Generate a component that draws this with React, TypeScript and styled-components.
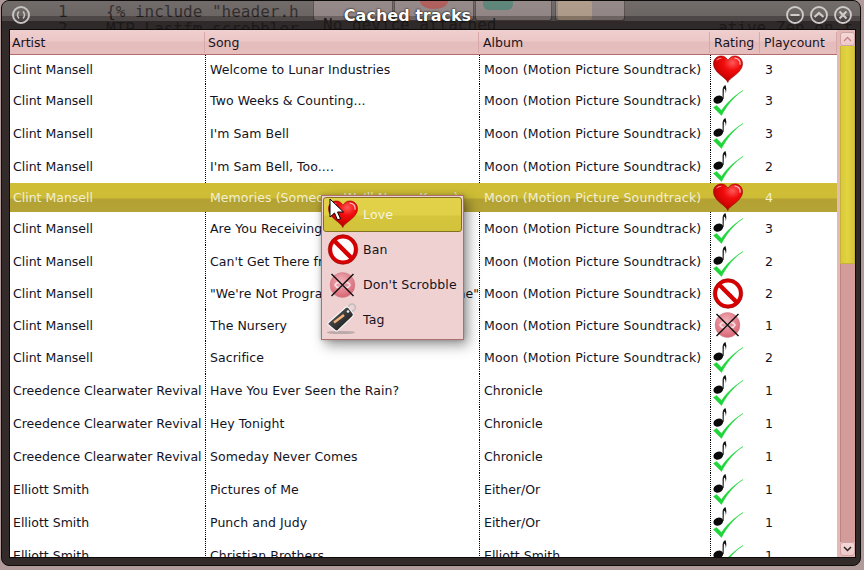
import React from "react";
import styled, { createGlobalStyle } from "styled-components";

const Global = createGlobalStyle`
  html, body { margin: 0; padding: 0; background: #b49c9c; }
  body { font-family: "DejaVu Sans", sans-serif; font-size: 12px; }
`;

const GRID = "195px 274px 231px 50px 77px";

const Page = styled.div`
  width: 864px; height: 570px; padding-left: 1px; box-sizing: border-box;
  overflow: hidden; background: #b09a9a;
`;
const Win = styled.div`
  width: 860px; height: 566px; box-sizing: border-box;
  display: flex; flex-direction: column;
  background: #332b2a; border: 1px solid #0e0b0b; border-radius: 8px;
  overflow: hidden; padding: 0 4px 7px 7px;
`;
const TitleBar = styled.div`
  position: relative; flex: 0 0 28px; margin: 0 -4px 0 -7px;
  display: flex; align-items: center; padding: 0 7px 0 9px;
  background: linear-gradient(#625b5a 0, #625b5a 20px, #3b3534 20px, #3b3534 100%);
  overflow: hidden;
`;
const BackBlock = styled.div<{ $x: number; $w: number; $h: number; $c: string }>`
  position: absolute; top: 0; left: ${p => p.$x}px; width: ${p => p.$w}px; height: ${p => p.$h}px;
  background: ${p => p.$c}; box-sizing: border-box; border: 1px solid #4d4342; border-top: 0; border-radius: 0 0 3px 3px;
`;
const BackShape = styled.div<{ $x: number; $y: number; $w: number; $h: number; $c: string; $r: string }>`
  position: absolute; left: ${p => p.$x}px; top: ${p => p.$y}px; width: ${p => p.$w}px; height: ${p => p.$h}px;
  background: ${p => p.$c}; border-radius: ${p => p.$r};
`;
const BackCode = styled.span<{ $x: number; $y: number }>`
  position: absolute; left: ${p => p.$x}px; top: ${p => p.$y}px;
  font: 16px/18px "DejaVu Sans Mono", monospace; color: #242020; white-space: pre;
`;
const Gloss = styled.div`
  position: absolute; inset: 0;
  background: linear-gradient(rgba(255,255,255,.1) 0, rgba(255,255,255,.06) 15px, rgba(0,0,0,.22) 15px, rgba(0,0,0,.2) 100%);
`;
const TitleText = styled.div`
  position: relative; flex: 1; text-align: center; color: #fff; font-weight: 700;
  font-size: 16px; padding-right: 1px; margin-top: 1px;
  text-shadow: 0 0 2px #000, 0 0 1px #000;
`;
const TitleBtn = styled.svg`
  position: relative; width: 20px; height: 20px; display: block; flex: none;
  & + & { margin-left: 4px; }
`;
const Frame = styled.div`
  position: relative; flex: 1; min-height: 0; display: flex;
  border: 1px solid #0b0909; background: #fff; overflow: hidden;
  width: 847px; box-sizing: border-box;
`;
const Main = styled.div`
  width: 827px; flex: none; display: flex; flex-direction: column; overflow: hidden;
`;
const Header = styled.div`
  display: grid; grid-template-columns: ${GRID}; height: 25px; box-sizing: border-box; flex: none;
  border-bottom: 1px solid #b56b6b;
  background: linear-gradient(#f0cfcf 0, #ecc7c7 11px, #e5bcbc 12px, #e6bebe 100%);
`;
const HeadCell = styled.div`
  display: flex; align-items: center; padding: 0 0 1px 2px; color: #17131c;
  border-right: 1px solid #d8a8a8; box-sizing: border-box; margin: 2px 0 1px; font-size: 12.5px;
  &:nth-child(2) { padding-left: 3px; }
  &:nth-child(3), &:nth-child(4) { padding-left: 4px; }
  &:nth-child(5) { padding-left: 4px; font-size: 12.4px; }
`;
const Row = styled.div<{ $h: number; $sel?: boolean }>`
  display: grid; grid-template-columns: ${GRID}; flex: none; height: ${p => p.$h}px;
  color: ${p => (p.$sel ? "#f2eed2" : "#13131f")};
  background: ${p => (p.$sel ? "linear-gradient(#d0bf35 0, #cdbc35 15px, #b3a233 16px, #b4a335 100%)" : "#fff")};
`;
const Cell = styled.div<{ $dot?: boolean; $sel?: boolean; $track?: number }>`
  display: flex; align-items: center; box-sizing: border-box; white-space: nowrap; overflow: hidden;
  font-size: 12.5px; letter-spacing: ${p => p.$track ?? 0}px;
  padding-left: ${p => (p.$dot ? 4 : 3)}px;
  border-left: ${p => (p.$dot ? `1px dotted ${p.$sel ? "transparent" : "#000"}` : "0")};
`;
const RatingCell = styled(Cell)`
  padding-left: 1px;
`;
const CountCell = styled(Cell)`
  padding-left: 5px;
`;
const Scroll = styled.div`
  width: 18px; flex: none; box-sizing: border-box; display: flex; flex-direction: column;
  padding: 2px 0 1px 3px; background: #e6b9b9;
`;
const ScrollBtn = styled.div`
  flex: 0 0 14px; width: 15px; box-sizing: border-box; display: flex; align-items: center; justify-content: center;
  background: linear-gradient(#f4d8d8, #ecc9c9); border: 1px solid #cfa3a3; border-radius: 3px;
`;
const Thumb = styled.div`
  flex: 0 0 218px; width: 15px; box-sizing: border-box; background: linear-gradient(90deg,#d9c93c,#e2d33f 50%,#d5c53a);
  border: 1px solid #c4b435; border-top: 0;
`;
const Track = styled.div`
  flex: 1; width: 15px; box-sizing: border-box; background: #d49b9b; border-left: 1px solid #bd8484;
`;
const Menu = styled.div`
  position: absolute; left: 311px; top: 165px; width: 143px; height: 145px; box-sizing: border-box;
  background: #efd1d1; border: 1px solid #af6f6f; padding: 1px;
  box-shadow: 4px 5px 12px rgba(0,0,0,.42), 0 0 4px rgba(0,0,0,.2);
`;
const MenuItem = styled.div<{ $on?: boolean }>`
  height: 35px; box-sizing: border-box; display: flex; align-items: center; gap: 4px; padding-left: 3px;
  font-size: 12.5px; letter-spacing: .14px; border-radius: 3px;
  color: ${p => (p.$on ? "#f7f3dc" : "#15131d")};
  border: ${p => (p.$on ? "1px solid #7f7120" : "1px solid transparent")};
  background: ${p => (p.$on ? "linear-gradient(#e2d24a 0, #e0d048 17px, #d5c53c 18px, #d3c33c 100%)" : "transparent")};
`;
const Cursor = styled.svg`
  position: absolute; left: 7px; top: 2px; width: 16px; height: 24px;
`;

function Defs() {
  return (
    <svg width="0" height="0" style={{ position: "absolute" }}>
      <defs>
        <radialGradient id="hg" cx=".65" cy=".25" r=".85">
          <stop offset="0" stopColor="#ff5a5a" />
          <stop offset=".35" stopColor="#f20c0c" />
          <stop offset=".8" stopColor="#c40000" />
          <stop offset="1" stopColor="#700000" />
        </radialGradient>
        <radialGradient id="sg" cx=".45" cy=".35" r=".7">
          <stop offset="0" stopColor="#f2b2ba" />
          <stop offset="1" stopColor="#d8606f" />
        </radialGradient>
        <linearGradient id="tg" x1="0" y1="0" x2="1" y2="1">
          <stop offset="0" stopColor="#666" />
          <stop offset="1" stopColor="#0c0c0c" />
        </linearGradient>
      </defs>
    </svg>
  );
}

const Heart = () => (
  <svg width="32" height="29" viewBox="0 0 32 29">
    <path d="M15.8 27.5C14.5 22.5 1.500 18 1.500 8.800 1.500 3.500 5.500 1 9.300 1c3 0 5.300 1.600 6.700 4.400C17.300 2.600 19.800 1 22.800 1c4 0 7.700 2.600 7.700 7.800 0 9.200-13.300 13.700-14.700 18.700z" fill="url(#hg)" stroke="#8a0000" strokeWidth=".6" />
    <path d="M23 3.200c3 .4 5.300 2.600 5.100 6" fill="none" stroke="#ffb5b5" strokeWidth="1.300" strokeLinecap="round" />
    <path d="M5 5c1-1.200 2.400-1.800 4-1.800" fill="none" stroke="#ff8a8a" strokeWidth="1.100" strokeLinecap="round" />
  </svg>
);
const NoteCheck = () => (
  <svg width="32" height="33" viewBox="0 0 32 33">
    <ellipse cx="6.300" cy="15.600" rx="5" ry="3.900" transform="rotate(-22 6.300 15.600)" fill="#0a0a0a" />
    <path d="M10.600 15V5.500C11 2.500 12.500 1.500 13.400 1c1 2.500 1.300 5 .3 8.500.3-3-.6-4.500-1.800-5L11.600 15z" fill="#111" />
    <path d="M1.500 23.500L9.500 31.500C13.500 23.500 21 13 31 6.500 20.500 13 13.500 20.500 9.500 26.500L4.500 21.500z" fill="#1fd63a" stroke="#1fd63a" strokeWidth=".5" strokeLinejoin="round" />
  </svg>
);
const Ban = () => (
  <svg width="32" height="31" viewBox="0 0 32 31">
    <circle cx="16" cy="15.500" r="12.800" fill="#fff" stroke="#d60000" strokeWidth="3.800" />
    <circle cx="16" cy="15.500" r="14.800" fill="none" stroke="#8e0000" strokeWidth=".6" />
    <path d="M6.800 6.300l18.400 18.400" stroke="#d60000" strokeWidth="4.400" />
  </svg>
);
const NoScrobble = () => (
  <svg width="32" height="32" viewBox="0 0 32 32">
    <circle cx="15.500" cy="16" r="12.400" fill="url(#sg)" stroke="#c9808a" strokeWidth=".6" />
    <path d="M8 16c2-3.500 5-3.500 7.500 0s5.500 3.500 7.500 0c-2-3.500-5-3.500-7.500 0S10 19.500 8 16z" fill="none" stroke="#f7dfe2" strokeWidth="1.600" />
    <path d="M4.500 5L26.500 27M26.500 5L4.500 27" stroke="#151111" strokeWidth="1.500" />
  </svg>
);
const Tag = () => (
  <svg width="32" height="35" viewBox="0 0 32 35">
    <ellipse cx="14" cy="30.500" rx="14" ry="1.600" fill="#9a8f8f" opacity=".6" />
    <circle cx="25" cy="5.500" r="3.400" fill="none" stroke="#bdbdbd" strokeWidth="1.500" />
    <path d="M1.500 20.500L18.500 5.500c1-.8 2-.8 3 0l4.500 6c.7 1 .5 2-.3 2.800L11 28.500c-1 .8-2 .7-2.800 0L1.500 23c-.8-.8-.8-1.800 0-2.500z" fill="url(#tg)" stroke="#f5f5f5" strokeWidth="1.200" />
    <path d="M7 20.500L17 13" stroke="#f4b27a" strokeWidth="2.400" />
    <circle cx="21" cy="9.500" r="1.300" fill="#eee" />
  </svg>
);

type Rating = "heart" | "note" | "ban" | "noscrobble";
const heights: Record<Rating, number> = { heart: 29, note: 33, ban: 31, noscrobble: 32 };
const icons: Record<Rating, React.ReactNode> = {
  heart: <Heart />, note: <NoteCheck />, ban: <Ban />, noscrobble: <NoScrobble />,
};
const M = "Moon (Motion Picture Soundtrack)";
const C = "Clint Mansell";
const R = "Creedence Clearwater Revival";
const E = "Elliott Smith";
const rows: [string, string, string, Rating, number][] = [
  [C, "Welcome to Lunar Industries", M, "heart", 3],
  [C, "Two Weeks & Counting...", M, "note", 3],
  [C, "I'm Sam Bell", M, "note", 3],
  [C, "I'm Sam Bell, Too....", M, "note", 2],
  [C, "Memories (Someone We'll Never Know)", M, "heart", 4],
  [C, "Are You Receiving Me?", M, "note", 3],
  [C, "Can't Get There from Here", M, "note", 2],
  [C, "\"We're Not Programmed to Love - Anyone\"", M, "ban", 2],
  [C, "The Nursery", M, "noscrobble", 1],
  [C, "Sacrifice", M, "note", 2],
  [R, "Have You Ever Seen the Rain?", "Chronicle", "note", 1],
  [R, "Hey Tonight", "Chronicle", "note", 1],
  [R, "Someday Never Comes", "Chronicle", "note", 1],
  [E, "Pictures of Me", "Either/Or", "note", 1],
  [E, "Punch and Judy", "Either/Or", "note", 1],
  [E, "Christian Brothers", "Elliott Smith", "note", 1],
];

export default function App() {
  return (
    <Page>
      <Global />
      <Defs />
      <Win>
        <TitleBar>
          <BackBlock $x={311} $w={80} $h={20} $c="#8a7e7d" />
          <BackBlock $x={392} $w={80} $h={20} $c="#8a7e7d" />
          <BackBlock $x={473} $w={77} $h={20} $c="#8a7e7d" />
          <BackBlock $x={553} $w={70} $h={20} $c="#8a7e7d" />
          <BackShape $x={418} $y={-8} $w={28} $h={16} $c="#a8504c" $r="50%" />
          <BackShape $x={481} $y={0} $w={30} $h={9} $c="#4f7a6e" $r="0 0 6px 6px" />
          <BackShape $x={556} $y={0} $w={34} $h={19} $c="#a8937f" $r="2px" />
          <BackCode $x={56} $y={2}>1</BackCode>
          <BackCode $x={56} $y={19}>2</BackCode>
          <BackCode $x={104} $y={2}>{'{% include "header.h'}</BackCode>
          <BackCode $x={104} $y={19}>MTP Lastfm scrobbler</BackCode>
          <BackCode $x={321} $y={15}>No device attached</BackCode>
          <BackCode $x={716} $y={18}>ative Zen on t</BackCode>
          <Gloss />
          <TitleBtn viewBox="0 0 20 20">
            <circle cx="10" cy="10" r="8" fill="none" stroke="#c8c4c4" strokeWidth="2" />
            <path d="M8 6.500C6 8.500 6 11.500 8 13.500M12 6.500c2 2 2 5 0 7" fill="none" stroke="#c8c4c4" strokeWidth="1.500" />
          </TitleBtn>
          <TitleText>Cached tracks</TitleText>
          <TitleBtn viewBox="0 0 20 20">
            <circle cx="10" cy="10" r="8" fill="none" stroke="#d0cccc" strokeWidth="1.800" />
            <path d="M5.500 10h9" stroke="#d0cccc" strokeWidth="2.200" />
          </TitleBtn>
          <TitleBtn viewBox="0 0 20 20">
            <circle cx="10" cy="10" r="8" fill="none" stroke="#d0cccc" strokeWidth="1.800" />
            <path d="M5.500 12l4.500-4 4.500 4" fill="none" stroke="#d0cccc" strokeWidth="2.200" />
          </TitleBtn>
          <TitleBtn viewBox="0 0 20 20">
            <circle cx="10" cy="10" r="8" fill="none" stroke="#d0cccc" strokeWidth="1.800" />
            <path d="M6.500 6.500l7 7M13.500 6.500l-7 7" stroke="#d0cccc" strokeWidth="2.200" />
          </TitleBtn>
        </TitleBar>
        <Frame>
          <Main>
            <Header>
              <HeadCell>Artist</HeadCell>
              <HeadCell>Song</HeadCell>
              <HeadCell>Album</HeadCell>
              <HeadCell>Rating</HeadCell>
              <HeadCell>Playcount</HeadCell>
            </Header>
            {rows.map((r, i) => {
              const sel = i === 4;
              return (
                <Row key={i} $h={heights[r[3]]} $sel={sel}>
                  <Cell>{r[0]}</Cell>
                  <Cell $dot $sel={sel} $track={0.06}>{r[1]}</Cell>
                  <Cell $dot $sel={sel} $track={r[2] === M ? 0.16 : 0}>{r[2]}</Cell>
                  <RatingCell $dot $sel={sel}>{icons[r[3]]}</RatingCell>
                  <CountCell>{r[4]}</CountCell>
                </Row>
              );
            })}
          </Main>
          <Scroll>
            <ScrollBtn>
              <svg width="9" height="6" viewBox="0 0 9 6"><path d="M1 5l3.500-3.500L8 5" fill="none" stroke="#c98080" strokeWidth="1.300" /></svg>
            </ScrollBtn>
            <Thumb />
            <Track />
            <ScrollBtn>
              <svg width="9" height="6" viewBox="0 0 9 6"><path d="M1 1l3.500 3.500L8 1" fill="none" stroke="#2a2020" strokeWidth="1.500" /></svg>
            </ScrollBtn>
          </Scroll>
          <Menu>
            <MenuItem $on><Heart />Love</MenuItem>
            <MenuItem><Ban />Ban</MenuItem>
            <MenuItem><NoScrobble />Don't Scrobble</MenuItem>
            <MenuItem><Tag />Tag</MenuItem>
            <Cursor viewBox="0 0 16 24">
              <path d="M1 1v18l4.500-4 3 7 3-1.300-3-6.700h6z" fill="#fff" stroke="#000" strokeWidth="1" />
            </Cursor>
          </Menu>
        </Frame>
      </Win>
    </Page>
  );
}
